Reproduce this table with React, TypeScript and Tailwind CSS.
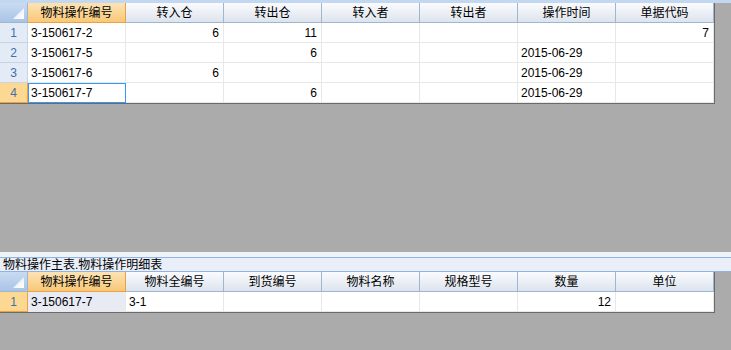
import React from "react";

type Cell = { text?: string; num?: boolean };

const topCols = ["物料操作编号", "转入仓", "转出仓", "转入者", "转出者", "操作时间", "单据代码"];
const topRows: Cell[][] = [
  [{ text: "3-150617-2" }, { text: "6", num: true }, { text: "11", num: true }, {}, {}, {}, { text: "7", num: true }],
  [{ text: "3-150617-5" }, {}, { text: "6", num: true }, {}, {}, { text: "2015-06-29" }, {}],
  [{ text: "3-150617-6" }, { text: "6", num: true }, {}, {}, {}, { text: "2015-06-29" }, {}],
  [{ text: "3-150617-7" }, {}, { text: "6", num: true }, {}, {}, { text: "2015-06-29" }, {}],
];

const bottomCols = ["物料操作编号", "物料全编号", "到货编号", "物料名称", "规格型号", "数量", "单位"];
const bottomRows: Cell[][] = [
  [{ text: "3-150617-7" }, { text: "3-1" }, {}, {}, {}, { text: "12", num: true }, {}],
];

const Corner = () => (
  <div className="w-[28px] h-[20px] shrink-0 bg-gradient-to-b from-[#c9dbf1] to-[#a9c4e6] border-r border-b border-[#9eb6ce] relative">
    <svg className="absolute right-[3px] bottom-[3px]" width="11" height="11" viewBox="0 0 11 11">
      <defs>
        <linearGradient id="tri" x1="0" y1="0" x2="1" y2="1">
          <stop offset="0" stopColor="#dfe8f4" />
          <stop offset="1" stopColor="#ffffff" />
        </linearGradient>
      </defs>
      <polygon points="11,0 11,11 0,11" fill="url(#tri)" />
    </svg>
  </div>
);

const Header = ({ cols }: { cols: string[] }) => (
  <div className="flex h-[20px]">
    <Corner />
    {cols.map((c, i) =>
      i === 0 ? (
        <div
          key={c}
          className="w-[98px] shrink-0 flex items-center justify-center bg-gradient-to-b from-[#fce3b4] to-[#f8c878] border-r border-b border-[#f0a03c] text-[12px] text-black"
        >
          {c}
        </div>
      ) : (
        <div
          key={c}
          className="w-[98px] shrink-0 flex items-center justify-center bg-gradient-to-b from-[#fafbfd] to-[#dde4ee] border-r border-b border-[#9eb6ce] text-[12px] text-black"
        >
          {c}
        </div>
      )
    )}
  </div>
);

const Grid = ({
  cols,
  rows,
  activeRow,
  shadeFirst,
}: {
  cols: string[];
  rows: Cell[][];
  activeRow: number;
  shadeFirst?: boolean;
}) => (
  <div className="w-[715px] bg-white border-r border-b border-[#6a6a6a]">
    <Header cols={cols} />
    {rows.map((row, r) => (
      <div key={r} className="flex h-[20px]">
        {r === activeRow ? (
          <div className="w-[28px] shrink-0 flex items-center justify-center bg-[#fcd892] border-r border-b border-[#f0a03c] text-[12px] text-[#3d70aa]">
            {r + 1}
          </div>
        ) : (
          <div className="w-[28px] shrink-0 flex items-center justify-center bg-[#e3ebf6] border-r border-b border-[#c6d4e6] text-[12px] text-[#3d70aa]">
            {r + 1}
          </div>
        )}
        {row.map((cell, c) => {
          const active = !shadeFirst && r === activeRow && c === 0;
          const shaded = shadeFirst && c === 0;
          return (
            <div
              key={c}
              className={
                "w-[98px] shrink-0 flex items-center text-[12px] text-black border-r border-b border-[#e8e8e8] " +
                (cell.num ? "justify-end pr-[4px] " : "pl-[3px] ") +
                (shaded ? "bg-[#e8ebf4] " : "") +
                (active ? "outline outline-1 -outline-offset-1 outline-[#3399ff]" : "")
              }
            >
              {cell.text}
            </div>
          );
        })}
      </div>
    ))}
  </div>
);

export default function App() {
  return (
    <div
      className="w-[731px] h-[350px] bg-[#ababab] flex flex-col overflow-hidden"
      style={{ fontFamily: '"Liberation Sans", "Noto Sans CJK SC", sans-serif' }}
    >
      <div className="h-[3px] bg-[#c2d7f0] shrink-0" />
      <Grid cols={topCols} rows={topRows} activeRow={3} />
      <div className="h-[148px] shrink-0" />
      <div className="h-[5px] bg-[#eef2f9] shrink-0" />
      <div className="h-[15px] shrink-0 bg-[#e9eef9] border-y border-[#8fb3e2] flex items-center pl-[3px] text-[12px] text-black leading-none">
        物料操作主表.物料操作明细表
      </div>
      <Grid cols={bottomCols} rows={bottomRows} activeRow={0} shadeFirst />
    </div>
  );
}
